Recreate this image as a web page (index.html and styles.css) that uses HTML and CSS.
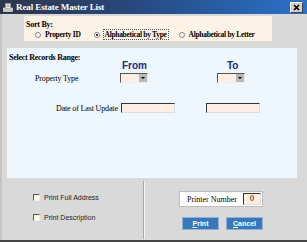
FILE: index.html
```html
<!DOCTYPE html>
<html>
<head>
    <title>Real Estate Master List</title>
    <link rel="stylesheet" href="styles.css">
</head>
<body>
    <div class="window">
        <!-- title bar -->
        <div class="titlebar">
            <svg class="app-icon" width="10" height="9" viewBox="0 0 10 9">
                <rect x="0.5" y="5" width="9" height="3.5" fill="#c8c8c8" stroke="#eee" stroke-width="0.6"/>
                <rect x="2.5" y="0.5" width="5" height="5" fill="#f0f0f0" stroke="#999" stroke-width="0.6"/>
                <line x1="3.5" y1="2" x2="6.5" y2="2" stroke="#777" stroke-width="0.6"/>
                <line x1="3.5" y1="3.5" x2="6.5" y2="3.5" stroke="#777" stroke-width="0.6"/>
            </svg>
            <span class="title">Real Estate Master List</span>
            <span class="close-btn">
                <svg width="7" height="7" viewBox="0 0 7 7">
                    <path d="M1 1 L6 6 M6 1 L1 6" stroke="#000" stroke-width="1.6"/>
                </svg>
            </span>
        </div>

        <div class="client">
            <!-- sort by -->
            <div class="sort-panel">
                <div class="bold-label">Sort By:</div>
                <div class="radio-row">
                    <label class="radio"><span class="radio-dot"></span>Property ID</label>
                    <label class="radio checked"><span class="radio-dot"></span><span class="focus">Alphabetical by Type</span></label>
                    <label class="radio"><span class="radio-dot"></span>Alphabetical by Letter</label>
                </div>
            </div>

            <!-- range -->
            <div class="range-panel">
                <div class="bold-label">Select Records Range:</div>
                <div class="range-head">
                    <span class="col-from">From</span>
                    <span class="col-to">To</span>
                </div>
                <div class="row row-type">
                    <span class="row-label type-label">Property Type</span>
                    <span class="combo combo-from"><span class="combo-arrow"></span></span>
                    <span class="combo combo-to"><span class="combo-arrow"></span></span>
                </div>
                <div class="row row-date">
                    <span class="row-label date-label">Date of Last Update</span>
                    <span class="textbox box-from"></span>
                    <span class="textbox box-to"></span>
                </div>
            </div>

            <!-- bottom -->
            <div class="bottom">
                <div class="options">
                    <label class="check"><span class="check-box"></span>Print Full Address</label>
                    <label class="check"><span class="check-box"></span>Print Description</label>
                </div>
                <div class="divider"></div>
                <div class="print-side">
                    <div class="printer-box">
                        <span>Printer Number</span>
                        <span class="num-box">0</span>
                    </div>
                    <div class="buttons">
                        <button class="btn"><u>P</u>rint</button>
                        <button class="btn"><u>C</u>ancel</button>
                    </div>
                </div>
            </div>
        </div>
    </div>
</body>
</html>
```

FILE: styles.css
```css
/* window */
body {
    margin: 0;
    background: #d9d9d9;
    font-family: 'Liberation Serif', serif;
    font-size: 8px;
    color: #000;
    white-space: nowrap;
}

.window {
    width: 307px;
    height: 242px;
    box-sizing: border-box;
    border-bottom: 2px solid #444;
    overflow: hidden;
}

/* title bar */
.titlebar {
    height: 14px;
    display: flex;
    align-items: center;
    background: linear-gradient(to right, #2e3648, #27467a 40%, #2a72c8);
    padding-left: 3px;
    padding-right: 4px;
}

.app-icon {
    margin-right: 3px;
}

.title {
    color: #fff;
    font-weight: bold;
    font-size: 9px;
    letter-spacing: -0.1px;
    flex: 1;
}

.close-btn {
    width: 11px;
    height: 9px;
    background: #d4d0c8;
    border: 1px solid;
    border-color: #fff #404040 #404040 #fff;
    display: flex;
    align-items: center;
    justify-content: center;
}

.client {
    border-left: 2px solid #c4c4c4;
    padding-left: 5px;
    padding-top: 2px;
    height: 226px;
}

.bold-label {
    font-weight: bold;
    letter-spacing: -0.25px;
}

/* sort by panel */
.sort-panel {
    margin-left: 17px;
    width: 248px;
    height: 25px;
    background: #fcf2e6;
    padding: 4px 0 0 2px;
    box-sizing: border-box;
}

.radio-row {
    display: flex;
    margin-top: 1px;
    margin-left: 9px;
    font-weight: bold;
    font-size: 7.5px;
    letter-spacing: -0.3px;
}

.radio {
    display: flex;
    align-items: center;
    margin-right: 12px;
}

.radio:first-child {
    margin-right: 13px;
}

.radio:nth-child(2) {
    margin-right: 11px;
}

.radio-dot {
    width: 6px;
    height: 6px;
    border-radius: 50%;
    border: 1px solid #888;
    background: #fff;
    margin-right: 4px;
    box-sizing: border-box;
    position: relative;
}

.checked .radio-dot::after {
    content: "";
    position: absolute;
    left: 1px;
    top: 1px;
    width: 2px;
    height: 2px;
    border-radius: 50%;
    background: #000;
}

.focus {
    outline: 1px dotted #555;
    padding: 0 1px;
}

/* range panel */
.range-panel {
    margin-top: 7px;
    width: 290px;
    height: 130px;
    background: #eef6fe;
    padding: 5px 0 0 2px;
    box-sizing: border-box;
}

.range-head {
    position: relative;
    height: 10px;
    font-family: 'Liberation Sans', Arial, sans-serif;
    font-weight: bold;
    font-size: 10px;
    color: #1c2a80;
    margin-top: -2px;
}

.col-from {
    position: absolute;
    left: 113px;
}

.col-to {
    position: absolute;
    left: 218px;
}

.row {
    display: flex;
    align-items: center;
}

.row-type {
    margin-top: 3px;
}

.row-label {
    flex-shrink: 0;
    letter-spacing: -0.15px;
}

.type-label {
    margin-left: 26px;
    width: 85px;
}

.combo {
    width: 28px;
    height: 10px;
    flex-shrink: 0;
    box-sizing: border-box;
    border: 1px solid;
    border-color: #555 #eee #eee #555;
    background: #fbeee4;
    display: flex;
    justify-content: flex-end;
}

.combo-to {
    margin-left: 69px;
}

.combo-arrow {
    width: 8px;
    background: #b8b8b8;
    position: relative;
}

.combo-arrow::after {
    content: "";
    position: absolute;
    left: 2px;
    top: 3px;
    border-left: 2px solid transparent;
    border-right: 2px solid transparent;
    border-top: 2px solid #000;
}

.row-date {
    margin-top: 20px;
}

.date-label {
    margin-left: 47px;
    width: 65px;
}

.textbox {
    width: 54px;
    height: 10px;
    flex-shrink: 0;
    box-sizing: border-box;
    border: 1px solid;
    border-color: #333 #ddd #ddd #333;
    background: #fdeee4;
}

.box-to {
    margin-left: 31px;
}

/* bottom area */
.bottom {
    display: flex;
    height: 61px;
}

.options {
    width: 136px;
    padding: 16px 0 0 26px;
    box-sizing: border-box;
    font-family: 'Liberation Sans', Arial, sans-serif;
    font-size: 7px;
    color: #222;
}

.check {
    display: flex;
    align-items: center;
    margin-bottom: 13px;
}

.check-box {
    width: 7px;
    height: 7px;
    box-sizing: border-box;
    border: 1px solid;
    border-color: #555 #eee #eee #555;
    background: #fdfbe8;
    margin-right: 4px;
}

.divider {
    width: 1px;
    margin-top: 3px;
    background: #a8a8a8;
    border-right: 1px solid #f4f4f4;
}

.print-side {
    padding: 13px 0 0 34px;
}

.printer-box {
    width: 84px;
    height: 16px;
    box-sizing: border-box;
    background: #fff;
    border: 1px solid #bbb;
    display: flex;
    align-items: center;
    padding-left: 7px;
}

.num-box {
    width: 18px;
    height: 12px;
    box-sizing: border-box;
    margin-left: auto;
    margin-right: 1px;
    border: 1px solid;
    border-color: #333 #ddd #ddd #333;
    background: #fdeee4;
    text-align: center;
    line-height: 10px;
}

.buttons {
    display: flex;
    margin-top: 10px;
    margin-left: 3px;
}

.btn {
    width: 37px;
    height: 13px;
    padding: 0;
    margin-right: 7px;
    border: 1px solid #8fb0d8;
    background: #3877b8;
    color: #fff;
    font-family: 'Liberation Sans', Arial, sans-serif;
    font-weight: bold;
    font-size: 7px;
}
```
